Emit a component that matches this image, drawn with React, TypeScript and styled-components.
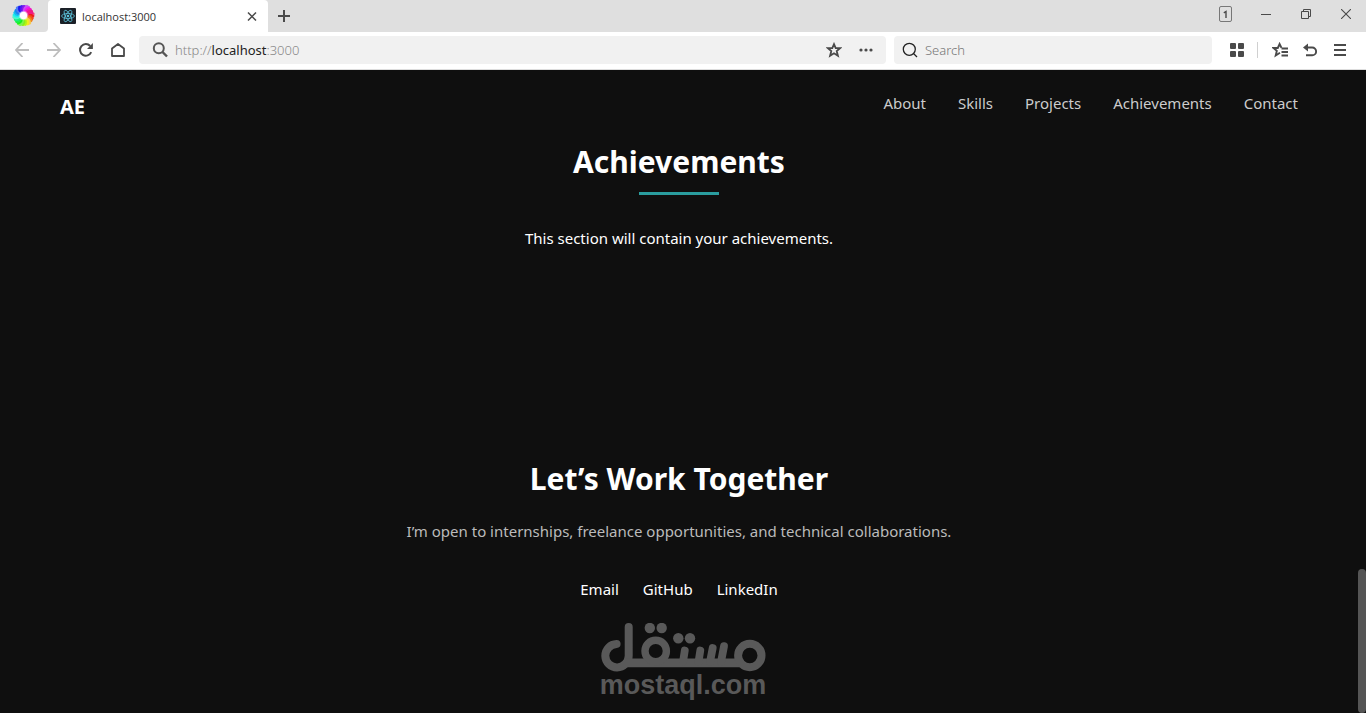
import React from 'react';
import styled, { createGlobalStyle } from 'styled-components';

const Global = createGlobalStyle`
  * { box-sizing: border-box; }
  body { margin: 0; background: #0f0f0f; font-family: "Noto Sans", "Open Sans", sans-serif; }
  button { border: 0; padding: 0; background: none; color: inherit; font: inherit; }
  a { color: inherit; text-decoration: none; }
  h1, h2, p { margin: 0; }
`;

const Window = styled.div`
  display: flex;
  flex-direction: column;
  min-height: 100vh;
`;

const TabStrip = styled.div`
  display: flex;
  align-items: stretch;
  height: 32px;
  background: #dfdfdf;
  color: #444;
`;

const BrandSlot = styled.div`
  width: 48px;
  padding: 4px 0 0 12px;
  border-bottom-right-radius: 4px;
  background: #dfdfdf;
`;

const TabBacking = styled.div`
  display: flex;
  background: #fff;
`;

const Tab = styled.div`
  display: flex;
  align-items: center;
  width: 220px;
  padding: 0 8px 0 12px;
  gap: 6px;
  border-radius: 4px 4px 0 0;
  background: #fff;
  color: #333;
  font-family: "Open Sans", sans-serif;
  font-size: 11px;
`;

const TabTitle = styled.span`
  flex: 1;
`;

const IconButton = styled.button<{ $w?: number; $color?: string }>`
  display: flex;
  flex: none;
  align-items: center;
  justify-content: center;
  width: ${p => p.$w ?? 32}px;
  color: ${p => p.$color ?? '#4a4a4a'};
`;

const WindowControls = styled.div`
  display: flex;
  margin-left: auto;
  padding-bottom: 4px;
`;

const Toolbar = styled.div`
  display: flex;
  align-items: center;
  height: 38px;
  padding: 0 10px 2px 6px;
  border-bottom: 1px solid #ddd;
  background: #fff;
`;

const Field = styled.label<{ $grow?: boolean }>`
  display: flex;
  align-items: center;
  flex: ${p => (p.$grow ? '730 1 0' : '302 1 0')};
  min-width: 0;
  height: 28px;
  margin-left: ${p => (p.$grow ? 5 : 8)}px;
  padding: 0 ${p => (p.$grow ? 4 : 8)}px 0 ${p => (p.$grow ? 13 : 8)}px;
  gap: 7px;
  border-radius: 4px;
  background: #f1f1f1;
  font-size: 13px;
  font-weight: 300;
`;

const FieldActions = styled.div`
  display: flex;
  align-items: center;
`;

const Address = styled.span`
  flex: 1;
  color: #888;
  b { color: #222; font-weight: 400; }
`;

const SearchInput = styled.input`
  flex: 1;
  min-width: 0;
  padding: 0;
  border: 0;
  background: none;
  font: inherit;
  &::placeholder { color: #777; opacity: 1; }
`;

const Divider = styled.span`
  width: 1px;
  height: 16px;
  margin: 0 6px 0 4px;
  background: #d0d0d0;
`;

const ToolGroup = styled.div`
  display: flex;
  padding-left: 9px;
  align-items: center;
`;

const Viewport = styled.div`
  display: flex;
  flex: 1;
  background: #0f0f0f;
  color: #fff;
`;

const Page = styled.div`
  flex: 1;
  display: flex;
  flex-direction: column;
`;

const ScrollTrack = styled.div`
  display: flex;
  flex-direction: column;
  justify-content: flex-end;
  width: 8px;
`;

const ScrollThumb = styled.div`
  height: 144px;
  border-radius: 4px;
  background: #555;
`;

const NavBar = styled.header`
  display: flex;
  justify-content: space-between;
  padding: 20px 60px 14px;
`;

const Logo = styled.a`
  font-size: 20px;
  font-weight: 700;
  line-height: 34px;
`;

const NavLinks = styled.nav`
  display: flex;
  gap: 32px;
  color: #ccc;
  font-size: 15px;
  line-height: 26px;
`;

const Section = styled.section<{ $min?: number }>`
  display: flex;
  flex-direction: column;
  align-items: center;
  min-height: ${p => p.$min ?? 0}px;
  text-align: center;
`;

const Heading = styled.h2`
  font-size: 30px;
  font-weight: 700;
  line-height: 48px;
`;

const Underline = styled.span`
  width: 80px;
  height: 3px;
  margin: 6px 0 31px;
  background: #2a9d9f;
`;

const Text = styled.p<{ $muted?: boolean }>`
  font-size: 15px;
  line-height: 24px;
  color: ${p => (p.$muted ? '#bbb' : '#fff')};
  margin-top: ${p => (p.$muted ? 16 : 0)}px;
`;

const ContactLinks = styled.div`
  display: flex;
  gap: 24px;
  margin-top: 34px;
  font-size: 15px;
  line-height: 24px;
`;

const Watermark = styled.div`
  display: flex;
  flex-direction: column;
  align-items: center;
  align-self: center;
  margin-top: 22px;
  padding-left: 8px;
  color: #595959;
  font-family: "Liberation Sans", sans-serif;
  font-size: 27px;
  font-weight: 700;
  line-height: 26px;
`;

const svg = { fill: 'none', stroke: 'currentColor' } as const;

const blades = Array.from({ length: 24 }, (_, i) => i * 15);

export default function App() {
  return (
    <Window>
      <Global />
      <TabStrip>
        <TabBacking>
          <BrandSlot>
            <svg width="23" height="23" viewBox="-12 -12 24 24" role="img" aria-label="Browser">
              {blades.map((a, i) => (
                <path
                  key={a}
                  d={i % 4 === 0 ? 'M2 0C4-4 7-5 11.600-2.500L11.300 1.500C7-1 5 0 3.500 2.500Z' : 'M2 0C4-4 7-5 10.800-2.500L10.600 1.500C7-1 5 0 3.500 2.500Z'}
                  fill={`hsl(${(a + 345) % 360} 88% ${i % 4 === 0 ? 64 : 52}%)`}
                  transform={`rotate(${a})`}
                />
              ))}
              <circle r="3.800" fill="#fff" />
              <circle r="5" fill="#fff" fillOpacity=".4" />
            </svg>
          </BrandSlot>
        </TabBacking>
        <Tab>
          <svg width="16" height="16" viewBox="0 0 16 16">
            <rect width="16" height="16" rx="1" fill="#1b2027" />
            <g fill="none" stroke="#5cc3dc" strokeWidth=".8">
              <ellipse cx="8" cy="8" rx="6.4" ry="2.5" />
              <ellipse cx="8" cy="8" rx="6.4" ry="2.5" transform="rotate(60 8 8)" />
              <ellipse cx="8" cy="8" rx="6.4" ry="2.5" transform="rotate(120 8 8)" />
            </g>
            <circle cx="8" cy="8" r="1.3" fill="#5cc3dc" />
          </svg>
          <TabTitle>localhost:3000</TabTitle>
          <IconButton $w={16} aria-label="Close tab">
            <svg width="10" height="10" viewBox="0 0 10 10" {...svg} strokeWidth="1.5"><path d="M1 1.500l8 8M9 1.500l-8 8" /></svg>
          </IconButton>
        </Tab>
        <IconButton aria-label="New tab">
          <svg width="12" height="12" viewBox="0 0 12 12" {...svg} strokeWidth="2"><path d="M6 0v12M0 6h12" /></svg>
        </IconButton>
        <WindowControls>
          <IconButton $w={40} aria-label="Open windows">
            <svg width="14" height="16" viewBox="0 0 14 16" {...svg}><rect x=".5" y=".5" width="12" height="15" rx="1.5" stroke="#777" /><path d="M4.800 6.800L7 5.500V12" strokeWidth="1.400" /></svg>
          </IconButton>
          <IconButton $w={40} aria-label="Minimize">
            <svg width="10" height="10" viewBox="0 0 10 10" {...svg}><path d="M0 5.500h10" /></svg>
          </IconButton>
          <IconButton $w={40} aria-label="Restore">
            <svg width="10" height="10" viewBox="0 0 10 10" {...svg}><path d="M.5 2.500h7v7h-7zM2.500 2.500v-2h7v7h-2" /></svg>
          </IconButton>
          <IconButton $w={40} aria-label="Close">
            <svg width="10" height="10" viewBox="0 0 10 10" {...svg} strokeWidth="1.100"><path d="M0 0l10 10M10 0L0 10" /></svg>
          </IconButton>
        </WindowControls>
      </TabStrip>
      <Toolbar>
        <IconButton $color="#bdbdbd" aria-label="Back">
          <svg width="14" height="14" viewBox="0 0 14 14" {...svg} strokeWidth="1.8"><path d="M14 7H1M7.500 0L1 7l6.500 7" /></svg>
        </IconButton>
        <IconButton $color="#bdbdbd" aria-label="Forward">
          <svg width="14" height="14" viewBox="0 0 14 14" {...svg} strokeWidth="1.8"><path d="M0 7h13M6.500 0L13 7l-6.500 7" /></svg>
        </IconButton>
        <IconButton aria-label="Reload">
          <svg width="14" height="14" viewBox="0 0 14 14" {...svg} strokeWidth="2"><path d="M12.200 9.200A5.800 5.800 0 1 1 11.200 3" /><path d="M13.900 0v6H8z" fill="currentColor" stroke="none" /></svg>
        </IconButton>
        <IconButton aria-label="Home">
          <svg width="14" height="14" viewBox="0 0 14 14" {...svg} strokeWidth="1.8" strokeLinejoin="round"><path d="M1 13V5.500L7 1l6 4.500V13z" /></svg>
        </IconButton>
        <Field as="div" $grow>
          <svg width="16" height="16" viewBox="0 0 16 16" {...svg} color="#555" strokeWidth="2"><circle cx="6.800" cy="6.300" r="5" /><path d="M10.500 10l4.500 4.500" strokeWidth="2.400" /></svg>
          <Address>http://<b>localhost</b>:3000</Address>
          <FieldActions>
            <IconButton aria-label="Bookmark this page">
              <svg width="16" height="16" viewBox="0 0 16 16" {...svg} strokeWidth="1.800"><path d="M8 2.200l1.700 4h4.300l-3.300 2.900 1.200 4.600L8 11.200l-3.900 2.500 1.200-4.600L2 6.200h4.300z" /></svg>
            </IconButton>
            <IconButton aria-label="More">
              <svg width="14" height="4" viewBox="0 0 14 4" fill="currentColor"><circle cx="2" cy="2" r="1.600" /><circle cx="7" cy="2" r="1.600" /><circle cx="12" cy="2" r="1.600" /></svg>
            </IconButton>
          </FieldActions>
        </Field>
        <Field>
          <svg width="16" height="16" viewBox="0 0 16 16" {...svg} color="#222" strokeWidth="1.300"><circle cx="7.300" cy="7.300" r="6" /><path d="M11.500 11.500l3.500 3.500" /></svg>
          <SearchInput placeholder="Search" aria-label="Search" />
        </Field>
        <ToolGroup>
          <IconButton aria-label="Speed dial">
            <svg width="14" height="14" viewBox="0 0 14 14" fill="currentColor"><rect width="6" height="6" rx="1" /><rect x="8" width="6" height="6" rx="1" /><rect y="8" width="6" height="6" rx="1" /><rect x="8" y="8" width="6" height="6" rx="1" /></svg>
          </IconButton>
          <Divider />
          <IconButton aria-label="Favorites">
            <svg width="16" height="16" viewBox="0 0 16 16" {...svg} strokeWidth="1.900"><path d="M9.500 5.800L7.600 2 5.800 6H1.500l3.300 2.900L3.700 13.500 8 10.800" /><path d="M9.500 6.500H16M9.500 10H16M9.500 13.500H16" /></svg>
          </IconButton>
          <IconButton $w={28} aria-label="Undo">
            <svg width="14" height="14" viewBox="0 0 14 14" {...svg} strokeWidth="1.900"><path d="M2 4.500h7.200a3.900 3.900 0 0 1 0 7.800H3" /><path d="M5 .5v8L0 4.500z" fill="currentColor" stroke="none" /></svg>
          </IconButton>
          <IconButton aria-label="Menu">
            <svg width="12" height="12" viewBox="0 0 12 12" {...svg} strokeWidth="2"><path d="M0 1h12M0 6h12M0 11h12" /></svg>
          </IconButton>
        </ToolGroup>
      </Toolbar>
      <Viewport>
        <Page>
          <NavBar>
            <Logo href="#home">AE</Logo>
            <NavLinks>
              <a href="#about">About</a>
              <a href="#skills">Skills</a>
              <a href="#projects">Projects</a>
              <a href="#achievements">Achievements</a>
              <a href="#contact">Contact</a>
            </NavLinks>
          </NavBar>
          <Section $min={317} id="achievements">
            <Heading>Achievements</Heading>
            <Underline />
            <Text>This section will contain your achievements.</Text>
          </Section>
          <Section id="contact">
            <Heading>Let’s Work Together</Heading>
            <Text $muted>I’m open to internships, freelance opportunities, and technical collaborations.</Text>
            <ContactLinks>
              <a href="#email">Email</a>
              <a href="#github">GitHub</a>
              <a href="#linkedin">LinkedIn</a>
            </ContactLinks>
          </Section>
          <Watermark>
            <svg width="166" height="49" viewBox="10 13 166 49" fill="none" stroke="currentColor" strokeWidth="8" strokeLinecap="round" role="img" aria-label="مستقل">
              <path d="M26.600 34A11.700 11.700 0 1 0 38.700 45.700V17" />
              <path d="M34 52.900H152" strokeWidth="8.600" strokeLinecap="butt" />
              <circle cx="65.700" cy="41" r="10.700" strokeWidth="7.400" />
              <circle cx="159.800" cy="45.500" r="11.700" />
              <path d="M94.800 40.500L93 52M110.300 40.500L108.500 52M122.700 38L120 52M134 36.200L131 52" strokeWidth="7.800" />
              <g fill="currentColor" stroke="none"><circle cx="59.800" cy="18" r="5.200" /><circle cx="71.700" cy="18" r="5.200" /><circle cx="88.300" cy="28.200" r="5.200" /><circle cx="100" cy="28.200" r="5.200" /></g>
            </svg>
            <span>mostaql.com</span>
          </Watermark>
        </Page>
        <ScrollTrack><ScrollThumb /></ScrollTrack>
      </Viewport>
    </Window>
  );
}
